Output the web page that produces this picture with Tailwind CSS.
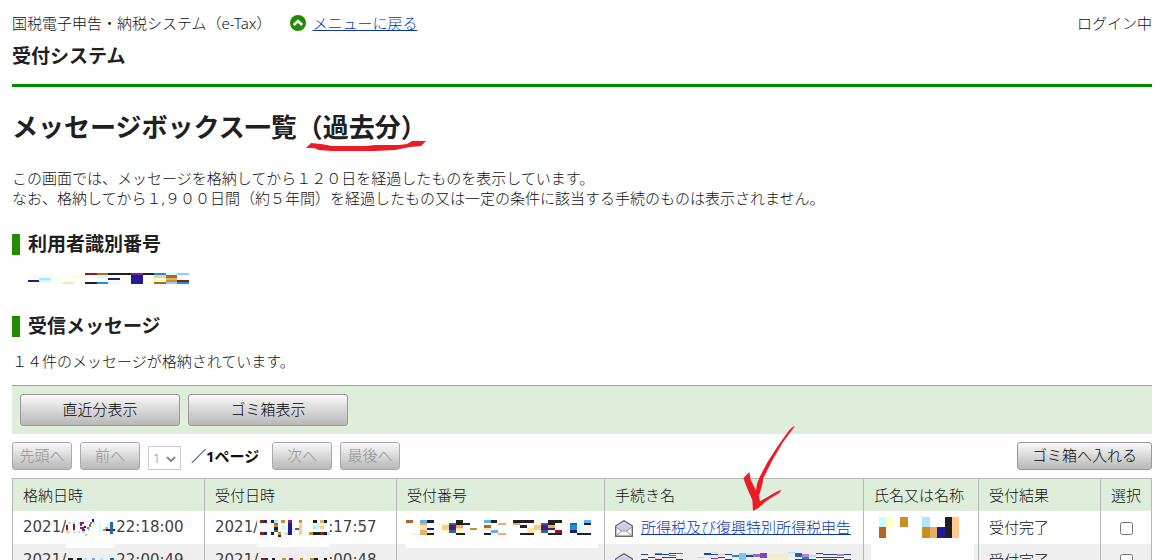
<!DOCTYPE html>
<html lang="ja">
<head>
  <meta charset="UTF-8">
  <title>メッセージボックス一覧</title>
  <script src="https://cdn.jsdelivr.net/npm/@tailwindcss/browser@4"></script>
</head>
<body class="h-screen overflow-hidden bg-white font-['Noto_Sans','Noto_Sans_CJK_JP',sans-serif] text-[15px] text-[#101010]">
  <div class="pl-3 pr-[9px]">

    <!-- ヘッダー -->
    <header class="border-b-3 border-[#008c00] pt-[11px] pb-4">
      <div class="flex items-center leading-6">
        <p class="font-light">国税電子申告・納税システム（e-Tax）</p>
        <svg class="ml-[19px] mr-[6px] size-4" viewBox="0 0 16 16"><circle cx="8" cy="8" r="8" fill="#228b00"/><path d="M3.8 10 8 6l4.200 4" fill="none" stroke="#fff" stroke-width="2.600"/></svg>
        <a href="#" class="font-light text-[#0a34b4] underline">メニューに戻る</a>
        <p class="ml-auto font-light">ログイン中</p>
      </div>
      <p class="mt-[9px] text-[19px] leading-6 font-bold text-[#202020]">受付システム</p>
    </header>

    <h1 class="mt-6 text-[26px] leading-8 font-bold text-[#202020]">メッセージボックス一覧<span class="relative">（過去分）<svg class="absolute left-[9px] top-8 h-[11px] w-[120px]" viewBox="0 0 120 11"><path d="M0 7 5 2l10 1 11 2h33l11-1h23l8-1 5-3h14l-5 5-11 1-15 3-21 1H26L13 9 8 7z" fill="#ed1c24"/></svg></span></h1>

    <p class="mt-[25px] leading-5 font-light">この画面では、メッセージを格納してから１２０日を経過したものを表示しています。<br>なお、格納してから１,９００日間（約５年間）を経過したもの又は一定の条件に該当する手続のものは表示されません。</p>

    <!-- 利用者識別番号 -->
    <h2 class="mt-[26px] border-l-8 border-[#228b00] pl-2 text-[19px] leading-[21px] font-bold text-[#202020]">利用者識別番号</h2>
    <svg class="mt-[18px] ml-4 h-[11px] w-[161px]" viewBox="24 24 483 33" shape-rendering="crispEdges">
      <path fill="#1f1b90" d="M24 45h33v6H24zM333 30h36v27h-36zM264 39h36v6h-36z"/>
      <path fill="#202020" d="M264 24h69v6h-69zM369 24h33v6h-33zM195 51h36v6h-36z"/>
      <path fill="#8e1b22" d="M195 24h36v6h-36zM471 45h36v6h-36z"/>
      <path fill="#ae6820" d="M231 24h33v6h-33zM438 30h33v9h-33zM402 51h36v6h-36z"/>
      <path fill="#8a1a94" d="M333 24h36v6h-36z"/>
      <path fill="#1c90cc" d="M402 24h36v6h-36zM231 51h33v6h-33zM471 51h36v6h-36z"/>
      <path fill="#90ccfc" d="M471 24h36v6h-36zM438 51h33v6h-33z"/>
      <path fill="#c8ffff" d="M438 24h33v6h-33zM231 30h33v9h-33zM57 45h36v6H57z"/>
      <path fill="#e4ffff" d="M57 30h36v9H57zM264 51h36v6h-36z"/>
      <path fill="#b0e4ff" d="M57 39h36v6H57z"/>
      <path fill="#ffffe4" d="M126 24h36v6h-36zM93 39h33v6H93z"/>
      <path fill="#ffffc8" d="M162 30h33v9h-33zM402 39h36v12h-36zM369 51h33v6h-33z"/>
      <path fill="#ffe4b0" d="M126 51h36v6h-36z"/>
      <path fill="#ffca90" d="M402 30h36v9h-36z"/>
      <path fill="#eaad66" d="M438 39h33v6h-33z"/>
      <path fill="#c98f22" d="M438 45h33v6h-33z"/>
    </svg>

    <!-- 受信メッセージ -->
    <h2 class="mt-8 border-l-8 border-[#228b00] pl-2 text-[19px] leading-[21px] font-bold text-[#202020]">受信メッセージ</h2>
    <p class="mt-[14px] leading-5 font-light">１４件のメッセージが格納されています。</p>

    <div class="mt-[14px] flex gap-2 border-t border-[#80bd77] bg-[#dfeedb] p-2 text-black">
      <button class="h-8 w-40 rounded-[3px] border border-[#999] bg-linear-to-b from-[#fafafa] to-[#b8b8b8] pb-[2px] font-light">直近分表示</button>
      <button class="h-8 w-40 rounded-[3px] border border-[#999] bg-linear-to-b from-[#fafafa] to-[#b8b8b8] pb-[2px] font-light">ゴミ箱表示</button>
    </div>

    <div class="mt-2 flex items-center gap-2">
      <button disabled class="h-7 w-[60px] rounded-[3px] border border-[#aaa] bg-linear-to-b from-[#fafafa] to-[#b8b8b8] pb-[2px] font-light leading-6 text-[#909090]">先頭へ</button>
      <button disabled class="h-7 w-[60px] rounded-[3px] border border-[#aaa] bg-linear-to-b from-[#fafafa] to-[#b8b8b8] pb-[2px] font-light leading-6 text-[#909090]">前へ</button>
      <div class="relative mt-1 h-6 w-[33px]">
        <select disabled aria-label="ページ" class="h-6 w-[33px] appearance-none border border-[#ccc] bg-white pl-1 text-[13px] font-light leading-5 text-[#888]"><option>1</option></select>
        <svg class="pointer-events-none absolute top-[10px] right-[5px] h-[6px] w-[10px]" viewBox="0 0 10 6"><path d="m1 1 4 4 4-4" fill="none" stroke="#888" stroke-width="2"/></svg>
      </div>
      <p class="w-[75px] pl-[2px] font-bold whitespace-nowrap">／1ページ</p>
      <button disabled class="h-7 w-[60px] rounded-[3px] border border-[#aaa] bg-linear-to-b from-[#fafafa] to-[#b8b8b8] pb-[2px] font-light leading-6 text-[#909090]">次へ</button>
      <button disabled class="h-7 w-[60px] rounded-[3px] border border-[#aaa] bg-linear-to-b from-[#fafafa] to-[#b8b8b8] pb-[2px] font-light leading-6 text-[#909090]">最後へ</button>
      <button class="ml-auto h-7 w-[135px] rounded-[3px] border border-[#999] bg-linear-to-b from-[#fafafa] to-[#b8b8b8] pb-[2px] font-light leading-6 text-black">ゴミ箱へ入れる</button>
    </div>

    <!-- メッセージ一覧 -->
    <table class="mt-2 w-full table-fixed border-collapse border border-[#b8b8b8] text-left leading-5 whitespace-nowrap">
      <colgroup>
        <col class="w-[192px]"><col class="w-[192px]"><col class="w-[208px]"><col><col class="w-[115px]"><col class="w-[122px]"><col class="w-[51px]">
      </colgroup>
      <thead>
        <tr class="h-8 bg-[#dfeedb]">
          <th class="border-x border-[#b8b8b8] pl-[10px] font-light">格納日時</th>
          <th class="border-x border-[#b8b8b8] pl-[10px] font-light">受付日時</th>
          <th class="border-x border-[#b8b8b8] pl-[10px] font-light">受付番号</th>
          <th class="relative border-x border-[#b8b8b8] pl-[10px] font-light">手続き名
            <svg class="absolute -top-[54px] left-[136px] h-[88px] w-[56px]" viewBox="420 12 168 264"><path d="M582 15Q568 20 560 34L530 76 500 122 476 168 468 188 465 208 449 176 445 153 427 172 440 205 454 237 456 270 472 261 500 237 536 215 541 206 525 213 477 241 474 225 484 190 487 172 515 116 545 65z" fill="#ed1c24"/></svg>
          </th>
          <th class="border-x border-[#b8b8b8] pl-[10px] font-light">氏名又は名称</th>
          <th class="border-x border-[#b8b8b8] pl-[10px] font-light">受付結果</th>
          <th class="border-x border-[#b8b8b8] text-center font-light">選択</th>
        </tr>
      </thead>
      <tbody>
        <tr class="h-[33px]">
          <td class="border-x border-[#b8b8b8] pl-[10px]">
            <div class="flex items-center font-['DejaVu_Sans',sans-serif] text-[#404040]">2021/<span class="relative h-5 w-[50px]">
              <svg class="absolute top-0 left-0 h-[31px] w-[50px]" viewBox="15 9 150 93" shape-rendering="crispEdges">
                <path fill="#fff" d="M15 9h147v93H15z"/>
                <path fill="#b0e4ff" d="M21 24h9v6h-9zM36 24h6v6h-6zM51 24h6v6h-6zM36 48h6v9h-6zM63 48h9v9h-9zM96 24h6v6h-6z"/>
                <path fill="#ffca90" d="M15 30h6v6h-6zM15 48h9v9h-9zM51 51h6v6h-6zM72 60h6v6h-6zM81 42h6v9h-6z"/>
                <path fill="#8e1b22" d="M15 33h6v15h-6zM36 30h6v18h-6zM57 30h6v6h-6zM63 45h9v6h-9z"/>
                <path fill="#8a1a94" d="M57 24h12v6H57zM57 39h12v6H57z"/>
                <path fill="#1f1b90" d="M93 15h6v9h-6zM69 36h6v6h-6z"/>
                <path fill="#ae6820" d="M84 30h6v9h-6z"/>
                <path fill="#1c90cc" d="M87 24h6v6h-6zM78 39h6v6h-6z"/>
                <path fill="#c8ffff" d="M114 24h6v36h-6zM138 30h6v6h-6z"/>
                <path fill="#1f68b0" d="M147 24h9v36h-9z"/>
                <path fill="#eaad66" d="M132 39h9v6h-9z"/>
                <path fill="#c98f22" d="M126 45h9v6h-9z"/>
                <path fill="#202020" d="M135 45h12v6h-12zM156 45h6v6h-6z"/>
              </svg></span>22:18:00</div>
          </td>
          <td class="border-x border-[#b8b8b8] pl-[10px]">
            <div class="flex items-center font-['DejaVu_Sans',sans-serif] text-[#404040]">2021/<span class="relative h-5 w-[70px]">
              <svg class="absolute top-0 -left-px h-[30px] w-[73px]" viewBox="15 9 219 90" shape-rendering="crispEdges">
                <path fill="#fff" d="M15 9h219v90H15z"/>
                <path fill="#c8ffff" d="M15 18h9v9h-9zM90 36h9v9h-9zM192 27h12v18h-12z"/>
                <path fill="#8e1b22" d="M24 18h12v9H24zM24 54h12v9H24zM204 54h12v9h-12z"/>
                <path fill="#1f1b90" d="M36 18h9v9h-9zM36 54h9v9h-9zM108 27h12v36h-12zM78 63h9v6h-9z"/>
                <path fill="#202020" d="M57 18h9v9h-9zM57 54h9v9h-9zM66 39h12v9H66zM183 18h12v9h-12zM216 18h9v9h-9zM183 54h21v9h-21zM216 54h9v9h-9z"/>
                <path fill="#b0e4ff" d="M66 18h12v9H66zM99 54h9v9h-9zM183 36h9v9h-9zM225 54h9v9h-9z"/>
                <path fill="#ae6820" d="M66 27h12v6H66z"/>
                <path fill="#c98f22" d="M87 18h12v9H87zM66 33h12v6H66zM78 54h9v9h-9zM141 18h9v9h-9zM171 54h12v9h-12z"/>
                <path fill="#1f68b0" d="M66 48h12v6H66zM129 42h12v6h-12z"/>
                <path fill="#8a1a94" d="M108 18h12v9h-12z"/>
                <path fill="#ffca90" d="M141 30h9v33h-9zM204 36h12v9h-12z"/>
                <path fill="#ffffc8" d="M24 27h12v6H24zM171 18h12v9h-12zM204 27h12v6h-12z"/>
                <path fill="#eaad66" d="M204 18h12v9h-12z"/>
              </svg></span>:17:57</div>
          </td>
          <td class="border-x border-[#b8b8b8] pl-[9px]">
            <div class="relative h-5">
              <svg class="absolute top-0 left-0 h-[31px] w-[192px]" viewBox="348 111 576 93" shape-rendering="crispEdges">
                <path fill="#fff" d="M348 111h576v93H348z"/>
                <path fill="#202020" d="M411 120h21v9h-21zM498 120h21v9h-21zM498 129h42v6h-42zM603 120h18v9h-18zM669 120h63v9h-63zM774 120h42v9h-42zM774 129h21v6h-21zM882 129h21v6h-21zM690 135h21v9h-21zM411 159h21v6h-21zM498 159h28v6h-28zM582 159h21v6h-21zM690 159h42v6h-42zM774 159h42v6h-42zM861 159h42v6h-42z"/>
                <path fill="#ae6820" d="M348 120h21v9h-21zM582 135h21v9h-21z"/>
                <path fill="#64b0ec" d="M390 120h21v9h-21zM582 120h21v9h-21zM882 120h21v9h-21zM603 150h21v9h-21z"/>
                <path fill="#eaad66" d="M390 129h21v6h-21zM390 150h21v15h-21zM624 129h24v6h-24zM669 129h21v6h-21zM498 135h21v9h-21zM774 135h21v9h-21zM624 159h24v6h-24z"/>
                <path fill="#ffe4b0" d="M390 135h21v15h-21zM498 144h21v6h-21zM582 144h21v6h-21zM711 144h21v15h-21z"/>
                <path fill="#ffca90" d="M456 135h21v15h-21zM732 135h21v15h-21z"/>
                <path fill="#5f1b60" d="M477 135h21v15h-21zM753 135h21v15h-21zM774 144h21v6h-21z"/>
                <path fill="#1f68b0" d="M477 129h21v6h-21zM477 150h21v9h-21zM753 129h21v6h-21zM753 150h21v9h-21zM840 129h21v6h-21z"/>
                <path fill="#ffffc8" d="M369 135h21v9h-21zM348 159h21v6h-21zM456 129h21v6h-21zM456 150h21v9h-21zM498 150h21v9h-21zM732 129h21v6h-21zM732 150h21v9h-21z"/>
                <path fill="#1b1b70" d="M411 144h21v6h-21zM840 150h21v9h-21z"/>
                <path fill="#c98f22" d="M540 144h21v6h-21z"/>
                <path fill="#8e1b22" d="M795 150h21v9h-21z"/>
                <path fill="#1c90cc" d="M840 135h21v15h-21z"/>
                <path fill="#c8ffff" d="M369 159h21v6h-21z"/>
                <path fill="#e4ffff" d="M861 120h21v39h-21z"/>
              </svg>
            </div>
          </td>
          <td class="border-x border-[#b8b8b8] pl-[10px]">
            <div class="flex items-center gap-2">
              <svg class="mt-[3px] h-[17px] w-[18px]" viewBox="0 0 18 17"><path d="M.7 6 9 .8 17.300 6v10.300H.7z" fill="#fff" stroke="#666" stroke-width="1.400"/><path d="M2.500 6 9 2.500 15.500 6v1.500L12 10.500H6L2.500 7.500z" fill="#c9cdea"/><path d="m1 7 5.500 4h5L17 7M1.500 15.500l5-4.500M16.500 15.500l-5-4.500" fill="none" stroke="#888"/></svg>
              <a href="#" class="font-light text-[#0a34b4] underline">所得税及び復興特別所得税申告</a>
            </div>
          </td>
          <td class="border-x border-[#b8b8b8] pl-[7px]">
            <div class="relative h-5">
              <svg class="absolute top-0 left-0 h-[43px] w-[103px]" viewBox="33 261 309 129" shape-rendering="crispEdges">
                <path fill="#fff" d="M33 261h309v129H33z"/>
                <path fill="#c8ffff" d="M57 261h21v30H57z"/>
                <path fill="#ffffc8" d="M78 261h21v30H78z"/>
                <path fill="#c98f22" d="M120 261h24v30h-24zM186 291h24v33h-24z"/>
                <path fill="#b0e4ff" d="M186 261h24v30h-24z"/>
                <path fill="#202020" d="M255 261h21v63h-21z"/>
                <path fill="#ffca90" d="M276 261h21v63h-21z"/>
                <path fill="#ae6820" d="M57 291h21v33H57z"/>
                <path fill="#eaad66" d="M210 291h21v33h-21z"/>
                <path fill="#1f1b90" d="M231 291h24v33h-24z"/>
              </svg>
            </div>
          </td>
          <td class="border-x border-[#b8b8b8] pl-[10px] font-light">受付完了</td>
          <td class="border-x border-[#b8b8b8]"><input type="checkbox" aria-label="選択" class="mt-[2px] mx-auto block size-[13px]"></td>
        </tr>
        <tr class="h-[33px] bg-[#efefef]">
          <td class="border-x border-[#b8b8b8] pl-[10px]">
            <div class="flex items-center font-['DejaVu_Sans',sans-serif] text-[#404040]">2021/<span class="relative h-5 w-[50px]">
              <svg class="absolute top-2 left-0 h-[3px] w-[50px]" viewBox="0 0 50 3" shape-rendering="crispEdges"><path fill="#202020" d="M2 0h5v3H2zM11 0h5v3h-5z"/><path fill="#b0e4ff" d="M18 0h3v3h-3zM34 0h3v3h-3z"/><path fill="#64b0ec" d="M26 0h3v3h-3z"/><path fill="#1f68b0" d="M44 0h4v3h-4z"/></svg></span>22:00:49</div>
          </td>
          <td class="border-x border-[#b8b8b8] pl-[10px]">
            <div class="flex items-center font-['DejaVu_Sans',sans-serif] text-[#404040]">2021/<span class="relative h-5 w-[70px]">
              <svg class="absolute top-2 left-0 h-[2px] w-[70px]" viewBox="0 0 70 2" shape-rendering="crispEdges"><path fill="#8e1b22" d="M3 0h4v2H3z"/><path fill="#1f1b90" d="M7 0h3v2H7z"/><path fill="#202020" d="M14 0h3v2h-3zM56 0h4v2h-4zM66 0h3v2h-3z"/><path fill="#c98f22" d="M24 0h4v2h-4zM42 0h3v2h-3zM52 0h4v2h-4z"/><path fill="#8a1a94" d="M31 0h4v2h-4z"/></svg></span>:00:48</div>
          </td>
          <td class="border-x border-[#b8b8b8]"></td>
          <td class="border-x border-[#b8b8b8] pl-[10px]">
            <div class="flex items-center gap-2">
              <svg class="mt-[3px] h-[17px] w-[18px]" viewBox="0 0 18 17"><path d="M.7 6 9 .8 17.300 6v10.300H.7z" fill="#fff" stroke="#666" stroke-width="1.400"/><path d="M2.500 6 9 2.500 15.500 6v1.500L12 10.500H6L2.500 7.500z" fill="#c9cdea"/><path d="m1 7 5.500 4h5L17 7M1.500 15.500l5-4.500M16.500 15.500l-5-4.500" fill="none" stroke="#888"/></svg>
              <svg class="h-4 w-[210px]" viewBox="15 18 630 48" shape-rendering="crispEdges">
                <path fill="#1a43b8" d="M15 24h21v3H15zM57 24h42v3H57zM99 21h42v3H99zM36 33h21v3H36zM78 33h42v3H78zM15 39h21v3H15zM57 39h21v3H57zM120 39h21v3h-21zM204 21h21v6h-21zM225 24h21v3h-21zM246 33h21v3h-21zM267 24h21v3h-21zM267 39h21v3h-21zM330 27h21v6h-21zM540 21h21v3h-21zM561 24h42v3h-42zM540 33h63v3h-63zM477 39h63v3h-63zM561 39h42v3h-42zM624 24h21v3h-21zM603 33h21v3h-21zM624 39h21v3h-21z"/>
                <path fill="#1c88d0" d="M99 27h21v4H99zM120 21h21v4h-21zM288 27h21v6h-21zM498 33h21v6h-21z"/>
                <path fill="#88c0ec" d="M309 21h21v21h-21z"/>
                <path fill="#8a40b8" d="M372 21h21v15h-21zM225 36h21v3h-21z"/>
                <path fill="#9a68b0" d="M351 24h21v9h-21zM57 21h21v4H57z"/>
                <path fill="#1a60cc" d="M477 21h21v12h-21z"/>
                <path fill="#c080b8" d="M498 24h21v9h-21zM603 24h21v6h-21z"/>
                <path fill="#a8e0ec" d="M183 33h21v3h-21zM456 18h21v3h-21zM519 27h21v6h-21z"/>
                <path fill="#fac0c8" d="M246 24h21v3h-21zM57 36h21v3H57z"/>
                <path fill="#c8ecd8" d="M225 18h21v4h-21zM330 21h21v6h-21z"/>
                <path fill="#efefd0" d="M393 21h42v21h-42zM435 21h21v21h-21z"/>
              </svg>
            </div>
          </td>
          <td class="border-x border-[#b8b8b8]"></td>
          <td class="border-x border-[#b8b8b8] pl-[10px] font-light">受付完了</td>
          <td class="border-x border-[#b8b8b8]"><input type="checkbox" aria-label="選択" class="mt-[2px] mx-auto block size-[13px]"></td>
        </tr>
      </tbody>
    </table>
  </div>
</body>
</html>
